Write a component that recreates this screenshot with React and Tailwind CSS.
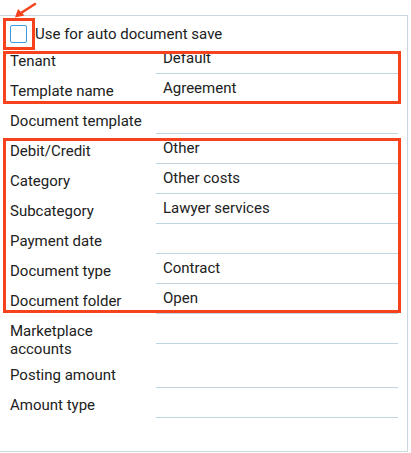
import React from "react";

const rows = [
  { label: "Tenant", value: "Default" },
  { label: "Template name", value: "Agreement" },
  { label: "Document template", value: "" },
  { label: "Debit/Credit", value: "Other" },
  { label: "Category", value: "Other costs" },
  { label: "Subcategory", value: "Lawyer services" },
  { label: "Payment date", value: "" },
  { label: "Document type", value: "Contract" },
  { label: "Document folder", value: "Open" },
  { label: "Marketplace accounts", value: "" },
  { label: "Posting amount", value: "" },
  { label: "Amount type", value: "" },
];

function Row({ label, value }) {
  return (
    <div className="flex items-start">
      <div className="w-[156px] shrink-0 pl-[10px] pr-[4px] pt-[8px] text-[15px] leading-[18px] text-[#212121]">
        {label}
      </div>
      <div className="flex-1 mr-[9px] h-[30px] border-b border-[#bfd5e1] pl-[7px] pt-[5px] text-[15px] leading-[18px] text-[#212121]">
        {value}
      </div>
    </div>
  );
}

export default function App() {
  return (
    <div className="relative w-[411px] h-[453px] bg-white pt-[15px]" style={{ fontFamily: "Roboto, 'Liberation Sans', sans-serif" }}>
      <div className="w-[408px] h-[437px] border-t border-r border-b border-[#c8d7df]">
        <div className="flex items-center h-[28px] pl-[10px] pt-[8px]">
          <div className="w-[17px] h-[18px] rounded-[2px] border border-[#3a9de6] bg-white" />
          <span className="ml-[8px] text-[15px] leading-[18px] text-[#212121]">Use for auto document save</span>
        </div>
        {rows.map((r) => (
          <Row key={r.label} label={r.label} value={r.value} />
        ))}
      </div>

      {/* annotation overlays */}
      <div className="absolute left-[3px] top-[18px] w-[32px] h-[32px] border-[3px] border-[#f6421d]" />
      <div className="absolute left-[3px] top-[51px] w-[398px] h-[53px] border-[3px] border-[#f6421d]" />
      <div className="absolute left-[3px] top-[138px] w-[398px] h-[175px] border-[3px] border-[#f6421d]" />
      <svg className="absolute left-0 top-0" width="40" height="22" viewBox="0 0 40 22">
        <line x1="35" y1="4" x2="21" y2="13" stroke="#f6421d" strokeWidth="2.5" strokeLinecap="round" />
        <polygon points="15,17.5 18,9 24.5,15.5" fill="#f6421d" />
      </svg>
    </div>
  );
}
